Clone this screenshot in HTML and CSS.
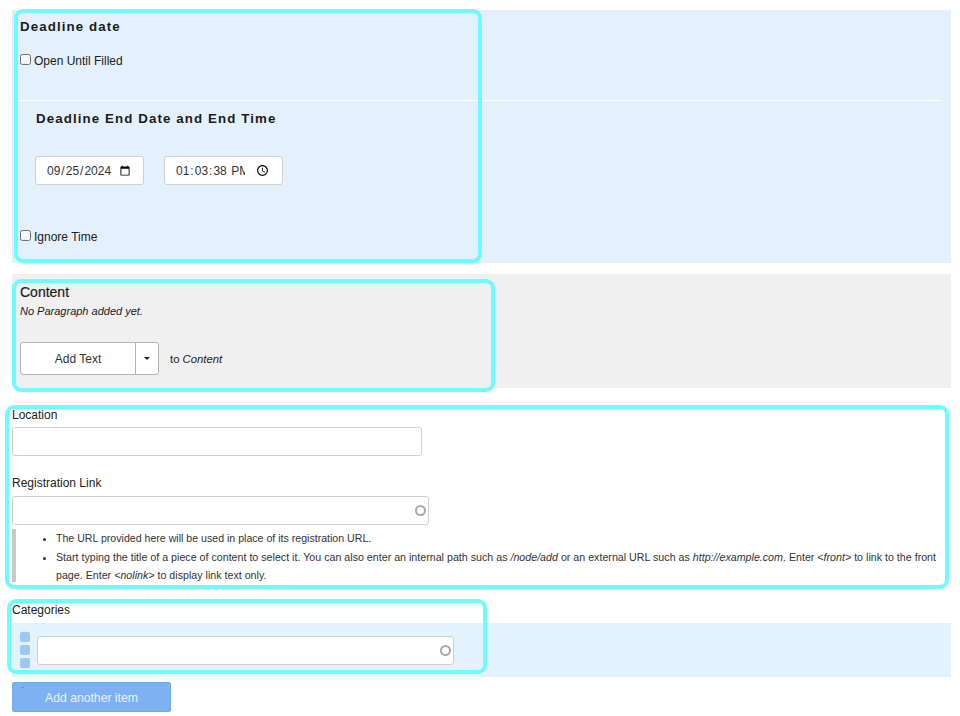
FILE: index.html
```html
<!DOCTYPE html>
<html lang="en">
<head>
    <meta charset="UTF-8" />
    <meta name="viewport" content="width=device-width, initial-scale=1.0" />
    <title>Edit event</title>
    <link rel="stylesheet" href="styles.css">
</head>
<body>
    <div class="page">
        <section class="panel panel-deadline">
            <h2 class="panel-title">Deadline date</h2>
            <label class="check check-open"><input type="checkbox"> Open Until Filled</label>
            <hr class="divider">
            <div class="end-date">
                <h3 class="panel-title">Deadline End Date and End Time</h3>
                <div class="date-row">
                    <input class="text-input date-input" type="date" value="2024-09-25">
                    <input class="text-input time-input" type="time" step="1" value="13:03:38">
                </div>
            </div>
            <label class="check check-ignore"><input type="checkbox"> Ignore Time</label>
        </section>

        <section class="panel panel-content">
            <h2 class="content-title">Content</h2>
            <p class="empty-note">No Paragraph added yet.</p>
            <div class="add-row">
                <div class="split-btn">
                    <button class="split-main">Add Text</button>
                    <button class="split-toggle"><span class="caret"></span></button>
                </div>
                <span class="add-target">to <em>Content</em></span>
            </div>
        </section>

        <div class="field field-location">
            <label class="field-label">Location</label>
            <input class="text-input location-input" type="text">
        </div>

        <div class="field field-link">
            <label class="field-label">Registration Link</label>
            <div class="auto-wrap link-wrap">
                <input class="text-input auto-input" type="text">
                <span class="throbber"></span>
            </div>
            <div class="description">
                <ul>
                    <li>The URL provided here will be used in place of its registration URL.</li>
                    <li>Start typing the title of a piece of content to select it. You can also enter an internal path such as <em>/node/add</em> or an external URL such as <em>http://example.com</em>. Enter <em>&lt;front&gt;</em> to link to the front page. Enter <em>&lt;nolink&gt;</em> to display link text only.</li>
                </ul>
            </div>
        </div>

        <div class="field field-categories">
            <label class="field-label">Categories</label>
            <div class="category-row">
                <div class="drag-handle"><span></span><span></span><span></span></div>
                <div class="auto-wrap category-wrap">
                    <input class="text-input auto-input" type="text">
                    <span class="throbber"></span>
                </div>
            </div>
            <button class="add-item">Add another item</button>
        </div>

        <!-- highlight boxes drawn over the form -->
        <div class="mark mark-deadline"></div>
        <div class="mark mark-content"></div>
        <div class="mark mark-fields"></div>
        <div class="mark mark-categories"></div>
    </div>
</body>
</html>
```

FILE: styles.css
```css
* {
    box-sizing: border-box;
}
html, body {
    margin: 0;
    background: #fff;
}
body {
    font-family: "Liberation Sans", Arial, sans-serif;
    font-size: 12px;
    color: #222;
}
.page {
    position: relative;
    width: 960px;
    height: 716px;
    padding: 10px 9px 0 12px;
    overflow: hidden;
}
.panel {
    padding-left: 8px;
}
.panel-deadline {
    height: 253px;
    padding-top: 9px;
    background: #e4f1fc;
}
.panel-title {
    margin: 0;
    font-size: 13.3px;
    line-height: 16px;
    font-weight: bold;
    letter-spacing: 1.1px;
    color: #1c1c1c;
}
.check {
    display: flex;
    align-items: center;
    gap: 3px;
    line-height: 14px;
    color: #222;
}
.check input {
    appearance: none;
    width: 11px;
    height: 11px;
    margin: -3px 0 0 0;
    background: #f4f8fc;
    border: 1px solid #6f6f6f;
    border-radius: 2.5px;
}
.check-open {
    margin-top: 19px;
}
.divider {
    height: 1px;
    margin: 32px 9px 0 0;
    border: 0;
    background: #fff;
}
.end-date {
    padding: 10px 0 0 15px;
}
.end-date .panel-title {
    padding-left: 1px;
}
.date-row {
    display: flex;
    gap: 20px;
    margin-top: 29px;
}
.text-input {
    display: block;
    height: 29px;
    background: #fff;
    border: 1px solid #cfcfcf;
    border-radius: 3px;
    font-family: "Liberation Sans", Arial, sans-serif;
    font-size: 12px;
    color: #333;
    outline: 0;
}
.date-input {
    width: 109px;
    padding: 0 10px 0 10px;
}
.time-input {
    width: 119px;
    padding: 0 10px 0 10px;
}
.check-ignore {
    margin-top: 45px;
}
.panel-content {
    height: 114px;
    margin-top: 11px;
    padding-top: 10px;
    background: #f0f0f0;
}
.content-title {
    margin: 0;
    font-size: 14px;
    line-height: 16px;
    font-weight: normal;
    -webkit-text-stroke: 0.2px #1c1c1c;
    color: #1c1c1c;
}
.empty-note {
    margin: 4px 0 0;
    font-size: 11px;
    line-height: 15px;
    font-style: italic;
}
.add-row {
    display: flex;
    align-items: center;
    gap: 11px;
    margin-top: 23px;
}
.split-btn {
    display: flex;
    width: 139px;
    height: 33px;
    background: #fff;
    border: 1px solid #b5b5b5;
    border-radius: 3px;
}
.split-btn button {
    padding: 0;
    background: none;
    border: 0;
    font-family: "Liberation Sans", Arial, sans-serif;
    font-size: 12px;
    color: #333;
}
.split-main {
    flex: 1;
    border-right: 1px solid #b5b5b5 !important;
}
.split-toggle {
    display: flex;
    align-items: center;
    justify-content: center;
    width: 22px;
}
.caret {
    width: 0;
    height: 0;
    border-left: 3.5px solid transparent;
    border-right: 3.5px solid transparent;
    border-top: 3.5px solid #222;
}
.add-target {
    font-size: 11.3px;
}
.field-label {
    display: block;
    line-height: 14px;
    color: #222;
}
.field-location {
    margin-top: 20px;
}
.location-input {
    width: 410px;
    margin-top: 5px;
}
.field-link {
    margin-top: 20px;
}
.auto-wrap {
    position: relative;
}
.link-wrap {
    width: 417px;
    margin-top: 6px;
}
.auto-input {
    width: 100%;
}
.throbber {
    position: absolute;
    right: 3px;
    top: 9px;
    width: 11px;
    height: 11px;
    border: 2px solid #a9a9a9;
    border-radius: 50%;
}
.description {
    height: 53px;
    margin-top: 4px;
    border-left: 4px solid #c8c8c8;
    font-size: 10.6px;
    color: #333;
}
.description ul {
    margin: 0;
    padding-left: 40px;
}
.description li {
    line-height: 18px;
}
.description li + li {
    margin-top: 1px;
    font-size: 10.68px;
}
.field-categories {
    margin-top: 21px;
}
.category-row {
    display: flex;
    align-items: center;
    gap: 7px;
    height: 54px;
    margin-top: 6px;
    padding-left: 8px;
    background: #e3f3fd;
}
.drag-handle {
    display: flex;
    flex-direction: column;
    gap: 3px;
}
.drag-handle span {
    display: block;
    width: 10px;
    height: 10px;
    background: #9cc8f5;
    border-radius: 2px;
}
.category-wrap {
    width: 417px;
}
.add-item {
    position: relative;
    display: block;
    width: 159px;
    height: 30px;
    margin-top: 5px;
    padding: 2px 0 0;
    background: #7db2f2;
    border: 1px solid #74a9ea;
    border-radius: 2px;
    font-family: "Liberation Sans", Arial, sans-serif;
    font-size: 12.2px;
    color: #e8f1fc;
}
.add-item::before {
    content: "";
    position: absolute;
    left: 8px;
    top: 4px;
    width: 3px;
    height: 1px;
    background: #5f95da;
}
.mark {
    position: absolute;
    border: 4px solid #6ffcff;
    border-radius: 9px;
    pointer-events: none;
}
.mark-deadline {
    left: 14px;
    top: 9px;
    width: 468px;
    height: 254px;
}
.mark-content {
    left: 12px;
    top: 279px;
    width: 483px;
    height: 113px;
}
.mark-fields {
    left: 5px;
    top: 405px;
    width: 944px;
    height: 184px;
}
.mark-categories {
    left: 7px;
    top: 599px;
    width: 480px;
    height: 75px;
}
```
